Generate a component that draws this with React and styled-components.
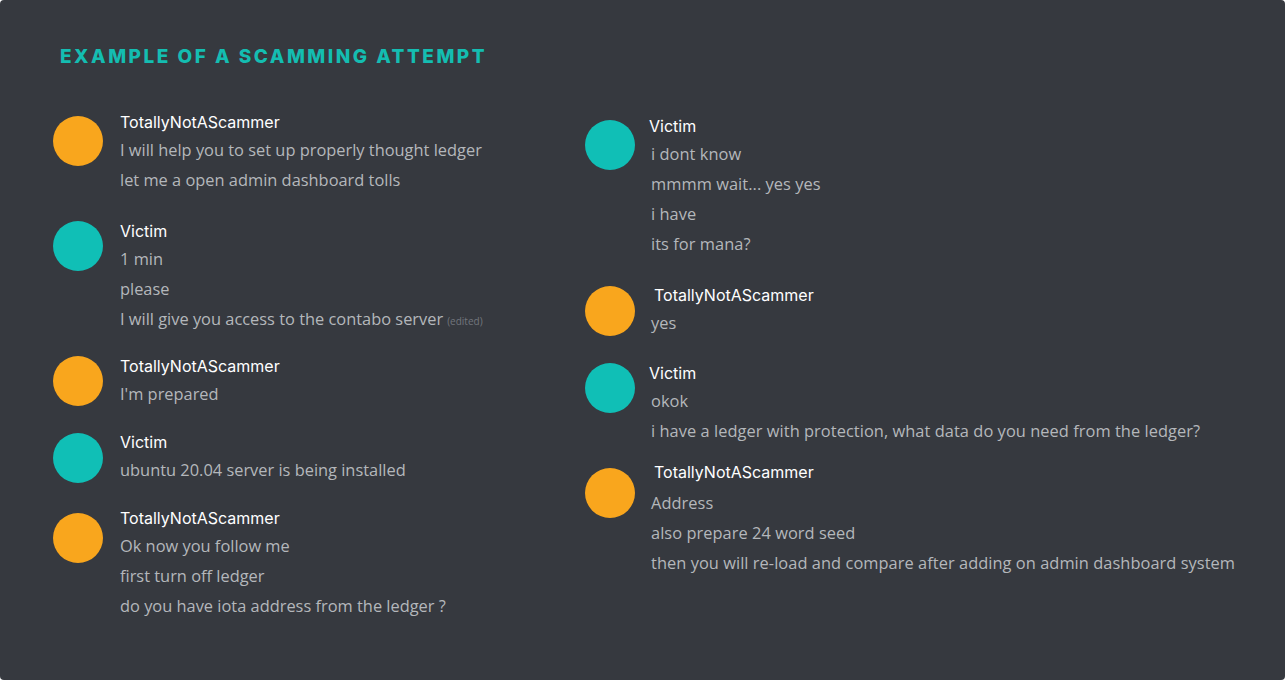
import React from 'react';
import styled, { createGlobalStyle } from 'styled-components';

const GlobalStyle = createGlobalStyle`
  html, body {
    margin: 0;
    padding: 0;
    background: #ffffff;
  }
`;

const palette = {
  card: '#36393f',
  teal: '#10bfb6',
  orange: '#f9a61d',
  title: '#14bdb1',
  name: '#ffffff',
  text: '#b4b7bb',
  muted: '#72767d',
};

const Card = styled.div`
  box-sizing: border-box;
  width: 1285px;
  height: 680px;
  background: ${palette.card};
  border-radius: 4px;
  padding: 45px 0 0 53px;
  overflow: hidden;
`;

const Title = styled.h1`
  margin: 0 0 42px 7px;
  font-family: Inter, 'Liberation Sans', sans-serif;
  font-size: 19px;
  line-height: 24px;
  font-weight: 800;
  letter-spacing: 2.5px;
  text-transform: uppercase;
  color: ${palette.title};
`;

const Columns = styled.div`
  display: grid;
  grid-template-columns: 532px 1fr;
  align-items: start;
`;

const Column = styled.div`
  display: flex;
  flex-direction: column;
  gap: 22px;
  padding-top: ${p => p.offset || 0}px;
`;

const Message = styled.div`
  display: flex;
  align-items: flex-start;
  margin-top: ${p => p.shift || 0}px;
`;

const Avatar = styled.div`
  flex: none;
  width: 50px;
  height: 50px;
  border-radius: 50%;
  margin-top: ${p => p.drop}px;
  margin-right: ${p => p.gap}px;
  background: ${p => (p.role === 'victim' ? palette.teal : palette.orange)};
`;

const Body = styled.div`
  display: flex;
  flex-direction: column;
`;

const Name = styled.div`
  font-family: Inter, 'Liberation Sans', sans-serif;
  font-size: 16px;
  line-height: 22px;
  color: ${palette.name};
  margin-bottom: ${p => p.space || 2}px;
  padding-left: ${p => p.indent || 0}px;
`;

const Line = styled.div`
  font-family: 'Open Sans', 'Liberation Sans', sans-serif;
  font-size: 16.4px;
  line-height: 30px;
  color: ${palette.text};
  letter-spacing: ${p => p.spacing || 0}px;
  padding-left: ${p => p.indent || 0}px;
  white-space: nowrap;
`;

const Edited = styled.span`
  font-size: 10px;
  letter-spacing: 0;
  color: ${palette.muted};
  margin-left: 4px;
`;

const left = [
  {
    role: 'scammer',
    drop: 5,
    lines: ['I will help you to set up properly thought ledger', 'let me a open admin dashboard tolls'],
  },
  {
    role: 'victim',
    drop: 1,
    shift: 3,
    lines: ['1 min', 'please', 'I will give you access to the contabo server'],
    edited: 2,
  },
  { role: 'scammer', drop: 1, shift: -3, lines: ["I'm prepared"] },
  { role: 'victim', drop: 2, lines: ['ubuntu 20.04 server is being installed'] },
  {
    role: 'scammer',
    drop: 6,
    lines: ['Ok now you follow me', 'first turn off ledger', 'do you have iota address from the ledger ?'],
  },
];

const right = [
  {
    role: 'victim',
    drop: 5,
    lines: ['i dont know', 'mmmm wait... yes yes', 'i have', 'its for mana?'],
  },
  { role: 'scammer', drop: 2, indent: 5, shift: 3, lines: ['yes'] },
  {
    role: 'victim',
    drop: 1,
    shift: 2,
    space: 0,
    lines: ['okok', 'i have a ledger with protection, what data do you need from the ledger?'],
  },
  {
    role: 'scammer',
    drop: 7,
    indent: 5,
    shift: -7,
    space: 5,
    lines: ['Address', 'also prepare 24 word seed', 'then you will re-load and compare after adding on admin dashboard system'],
  },
];

const names = { victim: 'Victim', scammer: 'TotallyNotAScammer' };

const Thread = ({ items, gap, spacing, lineIndent }) =>
  items.map((m, i) => (
    <Message key={i} shift={m.shift}>
      <Avatar role={m.role} drop={m.drop} gap={gap} />
      <Body>
        <Name indent={m.indent} space={m.space}>{names[m.role]}</Name>
        {m.lines.map((l, j) => (
          <Line key={j} spacing={spacing} indent={lineIndent}>
            {l}
            {m.edited === j && <Edited>(edited)</Edited>}
          </Line>
        ))}
      </Body>
    </Message>
  ));

const App = () => (
  <>
    <GlobalStyle />
    <Card>
      <Title>Example of a scamming attempt</Title>
      <Columns>
        <Column>
          <Thread items={left} gap={17} spacing={0} />
        </Column>
        <Column offset={4}>
          <Thread items={right} gap={14} spacing={0.05} lineIndent={2} />
        </Column>
      </Columns>
    </Card>
  </>
);

export default App;
